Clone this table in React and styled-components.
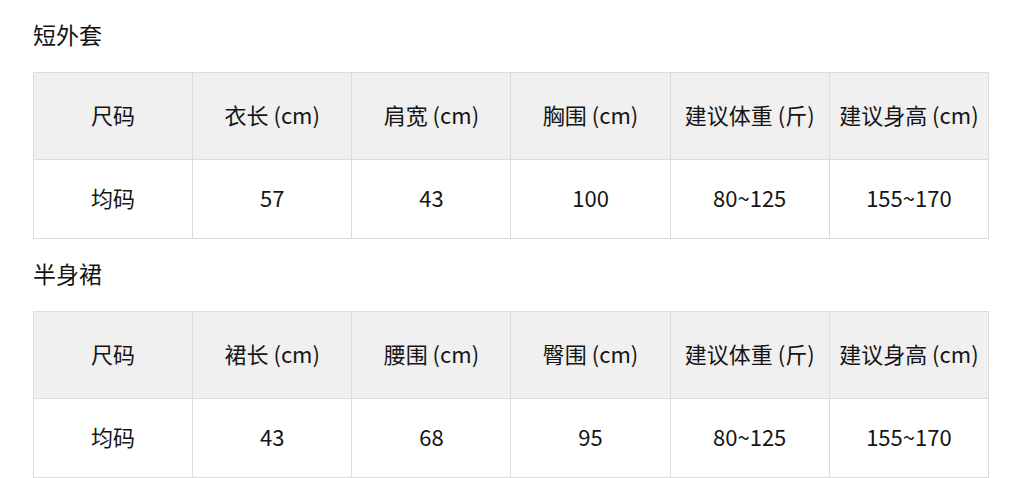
import React from 'react';
import styled, {createGlobalStyle} from 'styled-components';

const GlobalStyle = createGlobalStyle`
  body {
    margin: 0;
    background: #fff;
    font-family: "Noto Sans CJK SC", "Noto Sans", sans-serif;
    color: #151515;
  }
`;

const Page = styled.div`
  padding: 0 35px 0 33px;
  width: 956px;
`;

const Title = styled.h2`
  margin: 0;
  box-sizing: border-box;
  height: ${props => props.h}px;
  padding-bottom: 4px;
  display: flex;
  align-items: center;
  font-size: 23px;
  font-weight: 400;
  color: #151515;
`;

const SizeTable = styled.table`
  width: 956px;
  border-collapse: collapse;
  table-layout: fixed;
`;

const HeadCell = styled.th`
  height: 82px;
  padding: 0 0 4px;
  background: #f0f0f0;
  border: 1px solid #dcdcdc;
  font-size: 22px;
  font-weight: 400;
  text-align: center;
  vertical-align: middle;
  white-space: nowrap;
`;

const Cell = styled.td`
  height: 74px;
  padding: 0 0 4px;
  border: 1px solid #dcdcdc;
  font-size: 22px;
  text-align: center;
  vertical-align: middle;
`;

const tables = [
  {
    name: '短外套',
    titleHeight: 72,
    head: ['尺码', '衣长 (cm)', '肩宽 (cm)', '胸围 (cm)', '建议体重 (斤)', '建议身高 (cm)'],
    row: ['均码', '57', '43', '100', '80~125', '155~170'],
  },
  {
    name: '半身裙',
    titleHeight: 72,
    head: ['尺码', '裙长 (cm)', '腰围 (cm)', '臀围 (cm)', '建议体重 (斤)', '建议身高 (cm)'],
    row: ['均码', '43', '68', '95', '80~125', '155~170'],
  },
];

const App = () => (
  <Page>
    <GlobalStyle/>
    {tables.map((t) =>
      <React.Fragment key={t.name}>
        <Title h={t.titleHeight}>{t.name}</Title>
        <SizeTable>
          <thead>
          <tr>
            {t.head.map((h) => <HeadCell key={h}>{h}</HeadCell>)}
          </tr>
          </thead>
          <tbody>
          <tr>
            {t.row.map((v, i) => <Cell key={i}>{v}</Cell>)}
          </tr>
          </tbody>
        </SizeTable>
      </React.Fragment>
    )}
  </Page>
);

export default App;
